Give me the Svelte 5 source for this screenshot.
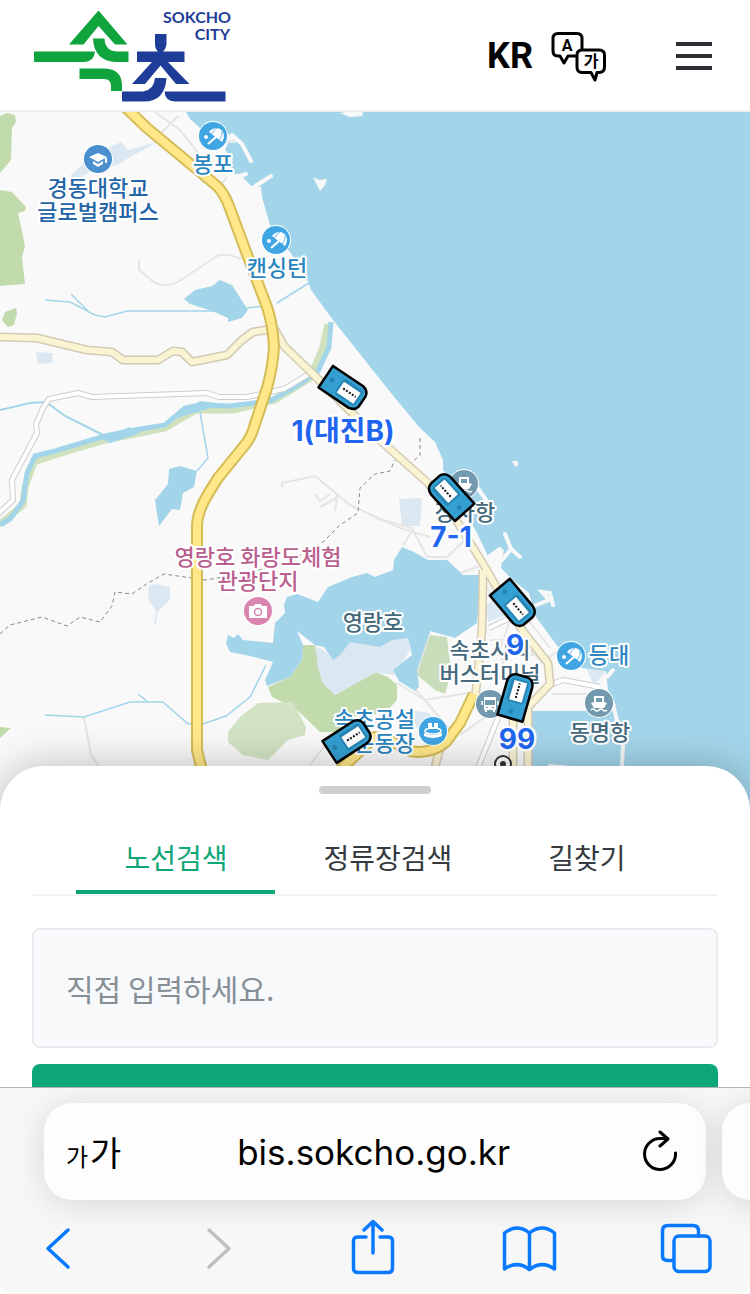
<script lang="ts">
	let activeTab = $state('route');
	let keyword = $state('');

	const tabs = [
		{ id: 'route', label: '노선검색' },
		{ id: 'stop', label: '정류장검색' },
		{ id: 'path', label: '길찾기' }
	];

	const places = [
		{ x: 98, y: 159, kind: 'school', color: '#4a8fce', text: '#2465a5', tx: 98, ty: 196, lines: ['경동대학교', '글로벌캠퍼스'] },
		{ x: 213, y: 136, kind: 'beach', color: '#3fa5e3', text: '#2b86bf', tx: 213, ty: 172, lines: ['봉포'] },
		{ x: 276, y: 240, kind: 'beach', color: '#3fa5e3', text: '#2b86bf', tx: 277, ty: 276, lines: ['캔싱턴'] },
		{ x: 464, y: 484, kind: 'ship', color: '#7399ae', text: '#456a7d', tx: 465, ty: 520, lines: ['장사항'] },
		{ x: 258, y: 611, kind: 'camera', color: '#d985b0', text: '#b9608f', tx: 258, ty: 565, lines: ['영랑호 화랑도체험', '관광단지'] },
		{ x: 490, y: 704, kind: 'bus', color: '#7399ae', text: '#456a7d', tx: 490, ty: 658, lines: ['속초시외', '버스터미널'] },
		{ x: 571, y: 656, kind: 'beach', color: '#3fa5e3', text: '#2b86bf', tx: 609, ty: 663, lines: ['등대'] },
		{ x: 599, y: 703, kind: 'ship', color: '#7399ae', text: '#456a7d', tx: 600, ty: 740, lines: ['동명항'] },
		{ x: 433, y: 731, kind: 'stadium', color: '#3fa5e3', text: '#2b86bf', tx: 415, ty: 727, anchor: 'end', lines: ['속초공설', '운동장'] }
	];

	const buses = [
		{ x: 344, y: 389, angle: 34, label: '1(대진B)', lx: 343, ly: 441 },
		{ x: 450, y: 496, angle: 228, label: '7-1', lx: 451, ly: 547 },
		{ x: 514, y: 604, angle: 50, label: '9', lx: 515, ly: 655 },
		{ x: 516, y: 697, angle: -74, label: '99', lx: 517, ly: 749 },
		{ x: 348, y: 740, angle: -33, label: '', lx: 0, ly: 0 }
	];

	const mainRoad = 'M122 104 147 128 217 186Q224 193 229 206L248 257 267 307Q273 325 274 347 273 366 267 388L254 427Q251 438 244 446L218 478 208 494Q197 512 197 527V750L203 775';
	const creamRoads = [
		'M-5 337 37 338 87 350 112 352 123 360H158L173 351 182 352 192 362 227 355 242 340 253 332 272 329',
		'M274 328 284 346 315 376 350 411 382 442 428 483 458 523 485 567 498 590 522 630 548 663 550 684 528 707V775',
		'M483 570 482 630 475 700',
		'M513 712V775',
		'M440 748 433 775'
	];
	const cityRoad = 'M474 694 460 723 446 742Q430 755 410 751L393 742 375 737 340 770';
	const whiteRoads = [
		'M-4 516 13 500 12 480 37 433 36 424 43 408 49 399 78 393 92 397 207 393 219 397 247 397 284 389 309 374',
		'M489 628 512 617',
		'M552 684 563 680 600 687',
		'M498 718 475 775'
	];
</script>

<svelte:head>
	<title>속초시 버스정보시스템</title>
</svelte:head>

{#snippet placeIcon(kind: string)}
	{#if kind === 'school'}
		<path d="M-9-2 0-6 9-2 0 3Z" />
		<path d="M-5 2V5L0 8 5 5V2L0 5ZM7-1H9V4H7Z" />
	{:else if kind === 'beach'}
		<circle cx="-7" cy="1" r="2" />
		<path d="M-4-4Q-1-8 4-8 10-7 11-1 11 3 9 6L-4-4Z" />
		<path d="M-1-2Q0-6 4-8M6 4Q10 0 9-5" stroke="#3fa5e3" stroke-width="0.8" fill="none" />
		<path d="M-5 8 3 1" stroke="#fff" stroke-width="2.2" />
	{:else if kind === 'ship'}
		<path d="M-5-7H5V-1L8 0 5 5H-5L-8 0-5-1ZM-3-5V-1H3V-5Z" fill-rule="evenodd" />
		<path d="M-8 7Q-6 5-4 7T0 7 4 7 8 7" stroke="#fff" stroke-width="1.5" fill="none" />
	{:else if kind === 'camera'}
		<path d="M-9-5H-4L-3-7H3L4-5H9V7H-9Z" />
		<circle cy="1" r="3.5" fill="none" stroke="#d985b0" stroke-width="1.6" />
	{:else if kind === 'bus'}
		<path d="M-6-7H6V6H5V8H3V6H-3V8H-5V6H-6ZM-5-4V1H5V-4ZM-4 3V4H-2V3ZM2 3V4H4V3Z" fill-rule="evenodd" />
		<path d="M-8-3V1M8-3V1" stroke="#fff" stroke-width="1.5" />
	{:else}
		<path d="M-5-8H-1V-4H1V-8H5V-2H-5Z" />
		<ellipse cy="0" rx="8" ry="3" fill="none" stroke="#fff" stroke-width="1.5" />
		<path d="M-9 2Q0 6 9 2V5Q0 9-9 5Z" />
	{/if}
{/snippet}

<div class="screen">
	<header>
		<a class="logo" href="/" aria-label="SOKCHO CITY">
			<svg width="200" height="104" viewBox="32 3 200 104">
				<g fill="#10a43c">
					<path d="M98.5 10.5 127.5 44.5H115L98.5 26 83.5 44.5H69Z" />
					<path d="M34 51.5H95Q94 62 84 62H34Z" />
					<path d="M93 38.5H104.5Q105 51.5 118 51.5H128.5V62H116Q94 61 93 38.5Z" />
					<path d="M79.5 68.5H105Q122 69 122 86V91H111V86Q111 79 104 79H79.5Z" />
				</g>
				<g fill="#1e3d98">
					<path d="M155 34H166.5V44Q166 49 163 51.5H184.5V62H168L189.5 84H176L160.5 65.5 145 84H132L152 62H137V51.5H158Q155 49 155 44Z" />
					<path d="M155 78H166.5Q165 101.5 144 101.5H122V91.5H143Q154 90 155 78Z" />
					<path d="M164.5 91.5H225.5V101.5H175Q165 101 164.5 91.5Z" />
					<g class="logo-text" text-anchor="end">
						<text x="231" y="23">SOKCHO</text>
						<text x="230" y="40">CITY</text>
					</g>
				</g>
			</svg>
		</a>
		<button class="lang">
			KR
			<svg width="56" height="52" viewBox="551 29 56 52" fill="#fff" stroke="#000" stroke-width="3" stroke-linejoin="round">
				<path d="M558 32.5H577Q582 32.5 582 37.5V50Q582 55 577 55H568L564 62 560 55H558Q553 55 553 50V37.5Q553 32.5 558 32.5Z" />
				<path d="M582 49H599Q604.5 49 604.5 54V66Q604.5 71.5 599 71.5H597L595 79 591 71.5H582Q577 71.5 577 66V54Q577 49 582 49Z" />
				<g class="lang-text" text-anchor="middle">
					<text x="567" y="50">A</text>
					<text x="591" y="66">가</text>
				</g>
			</svg>
		</button>
		<button class="menu" aria-label="메뉴">
			<svg width="36" height="30" viewBox="0 0 36 30" stroke="#2b2e33" stroke-width="4">
				<path d="M0 4H36M0 16H36M0 28H36" />
			</svg>
		</button>
	</header>

	<main>
		<svg class="map" viewBox="0 112 750 712" preserveAspectRatio="xMidYMin slice" role="img" aria-label="버스 위치 지도">
			<rect x="-400" y="0" width="1600" height="1000" fill="#f9f9f9" />

			<!-- parks and built-up areas -->
			<g fill="#c1dbac">
				<path d="M0 116 7 113 15 115 16 122 12 128 11 160 0 173Z" />
				<path d="M0 190 12 192 26 207 25 211 18 213 25 246 22 257 25 284 0 286Z" />
				<path d="M5 312 16 308 17 313 14 325 8 327 2 320Z" />
				<path d="M268 687 290 677 302 660 303 645 315 645 322 682 335 695 375 672 388 677 397 685 397 700 385 713 350 717 340 732 320 732 295 708 272 697Z" />
				<path d="M0 727 11 728 0 738Z" />
			</g>
			<path d="M240 717 258 703 293 702 306 727 305 735 288 740 268 760 243 755 228 742 228 732Z" fill="#d2e3c5" />
			<path d="M430 635 447 637 451 672 445 694 435 690 417 675 422 650Z" fill="#c8ddb9" />
			<g fill="#dce8f1">
				<path d="M71 175 90 157 121 142 128 150 157 142 127 159 117 165 90 172 69 184Z" />
				<path d="M36 352 53 353 52 363 38 364Z" />
				<path d="M149 586 155 584 170 587 170 599 157 613 156 624 154 625 156 610 148 600Z" />
				<path d="M315 645 318 667 322 682 335 695 375 673 395 675 410 650 408 637 378 640 350 641 333 657Z" />
				<path d="M399 499 422 498 420 526 402 526Z" />
				<path d="M486 606 495 596 512 613 488 622Z" />
				<path d="M582 660 607 670 594 685ZM410 710 430 713 440 755 420 735Z" />
			</g>

			<!-- minor roads -->
			<g fill="none" stroke="#e5e5e5" stroke-width="2">
				<path d="M139 260V270L155 283Q168 288 181 280L217 256Q225 252 241 259" />
				<path d="M155 112 180 130 195 149 213 172M178 116 160 134M217 145 235 140M217 190 227 177" />
				<path d="M282 487V483L315 476 350 505 400 528 430 537M315 494 320 501 330 494M320 507 335 499 338 495M335 511 337 498" />
				<path d="M375 518 412 528 427 557 447 557 471 534M445 560 460 573 480 566M403 545 412 531" />
				<path d="M84 717 91 755 105 775M310 765 325 745M397 683 425 700 475 692M425 700 412 686 417 675M425 700 450 730" />
				<path d="M490 640 520 640 540 660M495 655 535 655M510 620 500 650 510 690M460 735 495 710M505 590 550 648M552 694H600" />
				<path d="M430 632 417 672M479 575 501 610 533 617M530 670 560 650 600 672" />
			</g>
			<g fill="none" stroke="#8f8b78" stroke-width="1" stroke-dasharray="4 3">
				<path d="M0 634 10 625 42 617 67 626 80 617 100 622 112 606 115 592 132 594 148 583 164 574 205 580 250 573 292 560 323 542 340 525 358 513 360 488 375 474 390 471 395 460" />
				<path d="M420 438V455L411 463" />
			</g>

			<!-- rivers -->
			<path d="M328 324 322 350 310 378 275 400 234 410 196 410 165 428 105 440 55 455 34 462 25 487 23 505 0 524" fill="none" stroke="#d0e2bd" stroke-width="7" />
			<path d="M331 322 329 347 318 371 300 384 270 401 230 406 200 405 185 408 165 425 135 430 105 436 55 451 35 456 27 473 23 501 10 519 0 525" fill="none" stroke="#a3d5ea" stroke-width="5" />
			<path d="M100 438 130 427 140 433 110 443ZM174 419 200 401 225 404 190 414Z" fill="#a3d5ea" />
			<g fill="none" stroke="#a3d5ea" stroke-width="1.5">
				<path d="M0 410 30 403 46 402 65 416 105 436" stroke-width="2" />
				<path d="M45 300 70 302 95 315 105 317 127 311H220M71 294 88 311M247 308 265 306M277 303 312 281" />
				<path d="M200 412 208 458 197 471M45 715 84 717 130 702H163L187 723 197 726 226 716 250 697 266 665M138 694 147 701" />
			</g>

			<!-- sea, lake and ponds -->
			<g fill="#a3d5ea">
				<path d="M182 105 190 119 200 128 227 133 240 142 228 143 225 150 233 160 229 171 243 177 251 186 261 187 262 197 270 225 278 240 290 252 306 276 311 290 333 320 375 373 395 398 420 428 435 442 443 460 443 470 455 484 466 515 476 531 488 556 504 549 501 568 514 581 529 593 536 617 558 647 582 668 606 671 608 690 616 705 614 711H530L531 755 529 840H1200V90Z" />
				<path d="M184 299 195 290 212 286 220 280 232 285 248 310 242 318 228 322 228 318 212 311 190 304Z" />
				<path d="M169 469 180 466 197 471 194 487 183 493 180 510 172 509 159 526 155 500 168 484Z" />
				<path d="M375 577 367 573 352 577 328 587 318 602 297 594 287 597 284 605 285 613 275 623 273 643 243 640 238 634 234 638 228 635 226 643 230 652 250 656 273 662 265 680 267 686 290 677 302 660 303 645 297 631 315 645 324 647 333 660 340 655 350 642 380 647 392 640 408 638 412 655 393 670 399 681 415 691 419 687 417 670 430 631 455 638 477 623 481 575 463 575 447 560 428 560 414 552 402 547 394 560 393 570Z" />
			</g>
			<g fill="none" stroke="#f8f8f8" stroke-width="4" stroke-linecap="round">
				<path d="M232 135 242 144 251 161M235 177 246 174M254 187 271 176" />
				<path d="M477 487 486 500M490 556 500 549M505 534 511 549 520 557M511 549 502 560M614 708 623 745 622 766" />
				<path d="M534 606 549 600 542 592 550 593 553 605M607 677 613 670M550 766 600 771" />
			</g>
			<path d="M313 177 319 180 327 179 325 185 320 191ZM340 113 352 111 363 112 362 116 350 117ZM512 461 518 461 518 465 515 467Z" fill="#f8f8f8" />

			<g fill="none" stroke-linejoin="round">
				{#each whiteRoads as d}
					<path {d} stroke="#cdcdcd" stroke-width="6" />
					<path {d} stroke="#fff" stroke-width="4" />
				{/each}
				{#each creamRoads as d}
					<path {d} stroke="#d3cab5" stroke-width="9" />
				{/each}
				{#each creamRoads as d}
					<path {d} stroke="#faf4d3" stroke-width="6" />
				{/each}
				{#each [cityRoad, mainRoad] as d}
					<path {d} stroke="#d4bd57" stroke-width="12" />
					<path {d} stroke="#ffe78a" stroke-width="8" />
				{/each}
			</g>

			<g class="place" text-anchor="middle">
				<text x="373" y="630" fill="#456a7d">영랑호</text>
				{#each places as place}
					<g transform="translate({place.x} {place.y})" fill="#fff">
						<circle r="14" fill={place.color} stroke="#fff" stroke-width="2" />
						{@render placeIcon(place.kind)}
					</g>
					{#each place.lines as line, i}
						<text x={place.tx} y={place.ty + i * 24} fill={place.text} text-anchor={place.anchor}>{line}</text>
					{/each}
				{/each}
			</g>

			<circle cx="503" cy="764" r="8" fill="#fff" stroke="#333" stroke-width="2" />
			<circle cx="503" cy="764" r="3" fill="#333" />

			{#each buses as bus}
				<g transform="translate({bus.x} {bus.y}) rotate({bus.angle})">
					<path d="M-22-13H14Q21-12 22-6V6Q21 12 14 13H-22Z" fill="#349fd1" stroke="#000" stroke-width="2.5" stroke-linejoin="round" />
					<circle cx="-15" cy="-1" r="2.5" fill="#2685b4" />
					<rect x="-6" y="-9" width="24" height="18" rx="3" fill="#2685b4" />
					<rect x="-4" y="-6" width="20" height="13" fill="#fff" />
					<path d="M-1 0H14" stroke="#111" stroke-width="2" stroke-dasharray="2 1.5" />
				</g>
			{/each}
			<g class="bus-label" text-anchor="middle">
				{#each buses as bus}
					{#if bus.label}
						<text x={bus.lx} y={bus.ly}>{bus.label}</text>
					{/if}
				{/each}
			</g>
		</svg>

		<section class="sheet">
			<div class="handle"></div>
			<div class="tabs" role="tablist">
				{#each tabs as tab}
					<button role="tab" aria-selected={activeTab === tab.id} class:active={activeTab === tab.id} onclick={() => (activeTab = tab.id)}>
						{tab.label}
					</button>
				{/each}
			</div>
			<input type="text" aria-label="노선 검색어" placeholder="직접 입력하세요." bind:value={keyword} />
			<button class="search" aria-label="검색"></button>
		</section>
	</main>

	<footer>
		<div class="address-row">
			<div class="address">
				<button class="text-size" aria-label="글자 크기"><small>가</small>가</button>
				<span class="url">bis.sokcho.go.kr</span>
				<button aria-label="새로고침">
					<svg width="36" height="44" viewBox="642 1130 36 44" fill="none" stroke="#000" stroke-width="3" stroke-linecap="round" stroke-linejoin="round">
						<path d="M675.5 1153A15.5 15.5 0 1 1 660 1138.5H668M660 1132 668 1139 660 1146" />
					</svg>
				</button>
			</div>
			<div class="address"></div>
		</div>
		<nav>
			<button aria-label="뒤로">
				<svg width="56" height="56" viewBox="28 1219 56 56"><path d="M67 1230 47 1248.5 67 1267" /></svg>
			</button>
			<button aria-label="앞으로" disabled>
				<svg width="56" height="56" viewBox="186 1219 56 56"><path d="M209 1230 229 1248.5 209 1267" /></svg>
			</button>
			<button aria-label="공유">
				<svg width="56" height="56" viewBox="344 1219 56 56">
					<path d="M366 1237H358Q353.5 1237 353.5 1241V1268Q353.5 1272.5 358 1272.5H388Q392.5 1272.5 392.5 1268V1241Q392.5 1237 388 1237H380M373 1253V1222M364 1230 373 1221.5 382 1230" />
				</svg>
			</button>
			<button aria-label="책갈피">
				<svg width="56" height="56" viewBox="501 1219 56 56">
					<path d="M529.5 1233Q517 1223 504.5 1233V1269Q517 1260 529.5 1269.5 542 1260 554.5 1269V1233Q542 1223 529.5 1233ZM529.5 1233V1269" />
				</svg>
			</button>
			<button aria-label="탭">
				<svg width="56" height="56" viewBox="658 1219 56 56">
					<path d="M673 1260.5H668Q662.5 1260.5 662.5 1256V1231Q662.5 1225.5 668 1225.5H693Q698.5 1225.5 698.5 1231V1236" />
					<rect x="674" y="1236" width="36" height="35.5" rx="5" />
				</svg>
			</button>
		</nav>
	</footer>
</div>

<style>
	:global(body) {
		margin: 0;
		background: #fff;
	}

	.screen {
		display: flex;
		flex-direction: column;
		height: 100vh;
		font-family: 'Noto Sans CJK KR', sans-serif;
	}

	button {
		padding: 0;
		border: none;
		background: none;
		color: inherit;
		font: inherit;
		cursor: pointer;
	}

	svg {
		display: block;
	}

	header {
		display: flex;
		align-items: center;
		flex: none;
		height: 110px;
		padding: 0 38px 0 32px;
		border-bottom: 2px solid #f0f0f0;
	}

	.logo {
		margin-right: auto;
	}

	.logo-text {
		font-family: Lato, sans-serif;
		font-size: 16px;
		font-weight: 700;
	}

	.lang {
		display: flex;
		align-items: center;
		gap: 18px;
		margin-right: 69px;
		padding-top: 2px;
		color: #000;
		font-family: Roboto, 'Noto Sans CJK KR', sans-serif;
		font-size: 36px;
		font-weight: 700;
		line-height: 52px;
	}

	.lang-text {
		fill: #000;
		stroke: none;
		font-size: 16px;
	}

	main {
		flex: 1;
		min-height: 0;
		overflow: hidden;
	}

	.map {
		width: 100%;
		height: 55vh;
	}

	.place,
	.bus-label {
		paint-order: stroke;
		stroke-linejoin: round;
	}

	.place text {
		stroke: #fff;
		stroke-width: 4px;
		font-size: 22px;
		font-weight: 500;
	}

	.bus-label {
		fill: #1f65f0;
		stroke: #fff;
		stroke-width: 5px;
		font-family: Inter, 'Noto Sans CJK KR', sans-serif;
		font-size: 28px;
		font-weight: 700;
	}

	.sheet {
		position: relative;
		margin-top: -58px;
		padding: 20px 32px 32px;
		border-radius: 44px 44px 0 0;
		background: #fff;
		box-shadow: 0 0 40px rgba(0, 0, 0, 0.25);
	}

	.handle {
		width: 112px;
		height: 8px;
		margin: 0 auto 30px;
		border-radius: 4px;
		background: #cfcfcf;
	}

	.tabs {
		display: flex;
		justify-content: center;
		margin-bottom: 32px;
		border-bottom: 2px solid #f1f2f3;
	}

	.tabs button {
		height: 70px;
		padding: 0 48px;
		border-bottom: 4px solid transparent;
		color: #343a40;
		font-size: 28px;
	}

	.tabs button.active {
		border-color: #0ca678;
		color: #0ca678;
	}

	input {
		display: block;
		box-sizing: border-box;
		width: 100%;
		height: 120px;
		padding: 0 32px;
		border: 2px solid #e9ebef;
		border-radius: 8px;
		outline: none;
		background: #f8f9fb;
		color: #343a40;
		font: inherit;
		font-size: 30px;
	}

	input::placeholder {
		color: #868e96;
		opacity: 1;
	}

	.search {
		display: block;
		width: 100%;
		height: 120px;
		margin-top: 16px;
		border-radius: 8px;
		background: #0ca678;
	}

	footer {
		position: relative;
		flex: none;
		overflow: hidden;
		padding: 15px 0 19px;
		border-top: 1px solid #b4b4b4;
		border-radius: 0 0 12px 12px;
		background: #f7f7f7;
	}

	.address-row {
		display: flex;
		gap: 16px;
		padding-left: 44px;
	}

	.address {
		display: flex;
		align-items: center;
		justify-content: space-between;
		flex: 0 0 calc(100% - 44px);
		box-sizing: border-box;
		height: 97px;
		padding: 0 28px 0 22px;
		border-radius: 28px;
		background: #fdfdfd;
		box-shadow: 0 4px 32px rgba(0, 0, 0, 0.13);
	}

	.text-size {
		display: flex;
		align-items: baseline;
		gap: 2px;
		font-size: 34px;
	}

	.text-size small {
		font-size: 24px;
	}

	.url {
		margin-right: 16px;
		font-family: Inter, sans-serif;
		font-size: 35px;
	}

	nav {
		display: flex;
		justify-content: space-between;
		margin-top: 19px;
		padding: 0 36px 0 29px;
	}

	nav svg {
		fill: none;
		stroke: #087aff;
		stroke-width: 3.5;
		stroke-linecap: round;
		stroke-linejoin: round;
	}

	nav button:disabled svg {
		stroke: #bfbfbf;
	}
</style>
